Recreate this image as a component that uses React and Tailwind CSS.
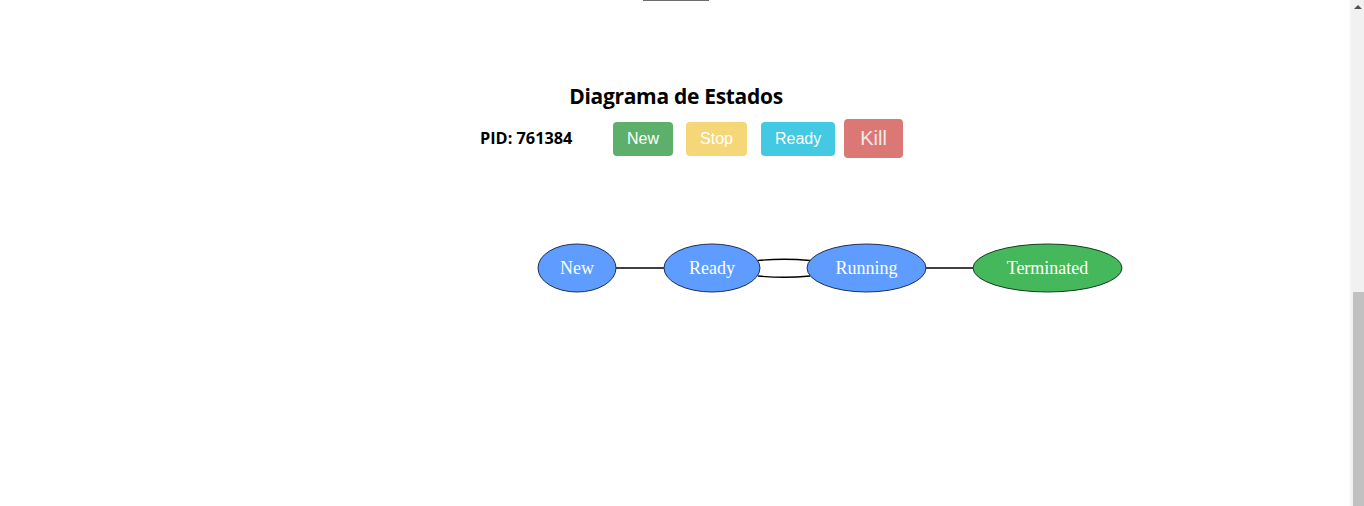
const nodes = [
  { label: 'New', cx: 40, rx: 39, fill: '#5e9cff', stroke: '#1f2f55' },
  { label: 'Ready', cx: 175, rx: 48, fill: '#5e9cff', stroke: '#1f2f55' },
  { label: 'Running', cx: 329.5, rx: 59.5, fill: '#5e9cff', stroke: '#1f2f55' },
  { label: 'Terminated', cx: 510.5, rx: 74.5, fill: '#45b85c', stroke: '#173c1f' },
]

function StateDiagram() {
  return (
    <svg width="590" height="52" viewBox="0 0 590 52" className="block">
      <line x1="79" y1="25" x2="127" y2="25" stroke="#000" strokeWidth="1.3" />
      <path d="M221 17.5 Q247 15 273 17.5" fill="none" stroke="#000" strokeWidth="1.3" />
      <path d="M221 33 Q247 35.5 273 33" fill="none" stroke="#000" strokeWidth="1.3" />
      <line x1="389" y1="25" x2="436" y2="25" stroke="#000" strokeWidth="1.3" />
      {nodes.map((n) => (
        <g key={n.label}>
          <ellipse cx={n.cx} cy="25" rx={n.rx} ry="24" fill={n.fill} stroke={n.stroke} strokeWidth="1" />
          <text
            x={n.cx}
            y="31"
            textAnchor="middle"
            fill="#fff"
            fontSize="18"
            fontFamily="'Liberation Serif', serif"
          >
            {n.label}
          </text>
        </g>
      ))}
    </svg>
  )
}

export default function App() {
  return (
    <div className="flex h-[506px] overflow-hidden bg-white">
      <main className="flex-1">
        <div className="pl-[3px] flex justify-center">
          <div className="w-[66px] h-px bg-[#6b6b6b]" />
        </div>
        <h2 className="mt-[80px] pl-[3px] text-center text-[21px] tracking-[-0.3px] leading-[30px] font-bold text-black font-['Open_Sans',sans-serif]">
          Diagrama de Estados
        </h2>
        <div className="mt-[8px] pl-[480px] flex items-center">
          <span className="w-[133px] text-[16.3px] font-bold text-black font-['Open_Sans',sans-serif]">PID: 761384</span>
          <div className="flex items-center font-['Liberation_Sans',Arial,sans-serif] text-white">
            <button className="px-[14px] py-[6px] leading-[22px] text-base rounded bg-[#5cb06b]">New</button>
            <button className="ml-[13px] px-[14px] py-[6px] leading-[22px] text-base rounded bg-[#f5d778]">Stop</button>
            <button className="ml-[14px] px-[14px] py-[6px] leading-[22px] text-base rounded bg-[#43c9e1]">Ready</button>
            <button className="ml-[9px] px-[16px] py-[6px] leading-[27px] text-xl rounded bg-[#db7775] text-[#f3e6e6]">Kill</button>
          </div>
        </div>
        <div className="mt-[85px] pl-[537px]">
          <StateDiagram />
        </div>
      </main>
      <aside className="w-[15px] flex flex-col bg-[#f1f1f1] border-l-2 border-[#fafafa]">
        <div className="h-[292px] flex justify-center pt-[5px]">
          <div className="w-0 h-0 border-l-[4px] border-r-[4px] border-b-[4px] border-l-transparent border-r-transparent border-b-[#505050]" />
        </div>
        <div className="flex-1 ml-[2px] bg-[#c1c1c1]" />
      </aside>
    </div>
  )
}
